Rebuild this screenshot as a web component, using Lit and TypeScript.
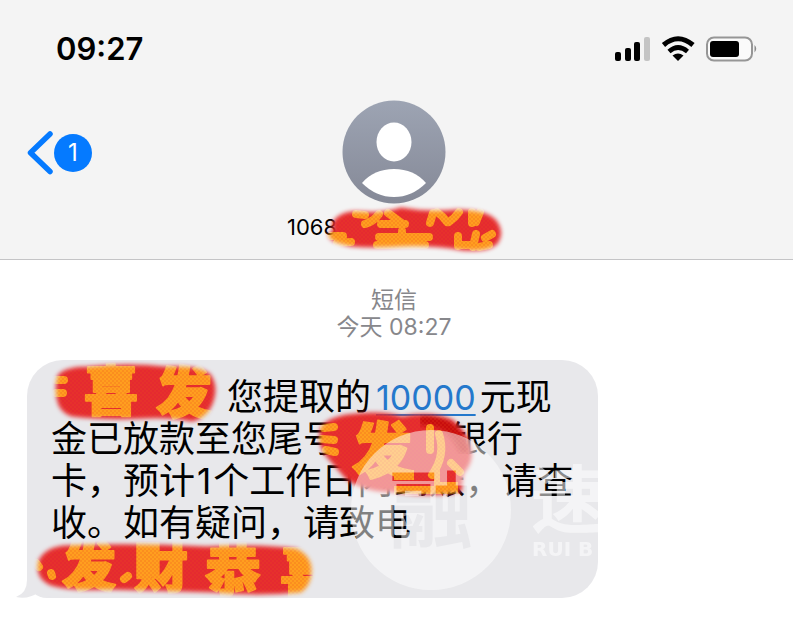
import { LitElement, html, css, svg } from "lit";
import { customElement } from "lit/decorators.js";

interface Glyph { t: string; x: number; y: number; s: number }
interface Stroke { name: string; box: number[]; shape: string; glyphs: Glyph[]; marks?: string; bars?: string; smear?: string }

const strokes: Record<string, Stroke> = {
  sender: {
    name: "sender",
    box: [320, 200, 190, 60],
    shape: "M334 224 Q342 211 362 213 Q384 215 402 209 Q430 214 458 211 Q486 211 496 221 Q504 232 498 242 Q490 251 464 249 Q436 244 404 245 Q372 247 352 245 Q330 241 331 234 Q338 232 334 224Z",
    glyphs: [],
    marks: "M357 214 L366 215 M380 214 Q374 222 366 224 M389 213 L404 224 M382 224 H406 M434 213 L431 223 M438 212 Q444 216 448 222 M460 212 Q456 218 450 222 M473 212 V223 M481 212 L477 222 M332 236 L344 236 M338 243 L352 242 M403 231 V245 M380 237 H430 M378 245 H426 M459 236 V246 M461 245 H474 M477 234 L474 247 M486 238 L493 234 M480 247 L490 245",
  },
  name: {
    name: "name",
    box: [50, 360, 175, 66],
    shape: "M59 376 Q66 368 88 368 Q130 364 165 368 Q198 366 209 375 Q217 386 212 401 Q207 416 192 420 Q170 416 146 417 Q104 419 72 415 Q60 411 58 398 Q56 386 59 376Z",
    glyphs: [
      { t: "喜", x: 84, y: 411, s: 54 },
      { t: "发", x: 156, y: 413, s: 56 },
    ],
    marks: "M56 380 L64 380 M56 393 L63 393",
  },
  account: {
    name: "account",
    box: [310, 405, 172, 96],
    shape: "M322 428 Q330 417 356 415 Q384 412 402 418 Q430 412 452 421 Q466 432 470 449 Q472 463 462 473 L460 491 Q432 496 398 491 Q364 491 347 478 Q334 463 326 454 Q318 441 322 428Z",
    glyphs: [{ t: "发", x: 352, y: 473, s: 60 }],
    marks: "M324 428 L334 427 M322 439 L334 440 M326 450 L335 452 M430 428 V450 M439 434 Q446 455 432 475 M451 463 L460 472",
    bars: "M394 470 h20 v10 h-20z M434 470 h6 v12 h18 v12 h-64 v-8 h40z",
    smear: "M424 420 Q452 420 464 448",
  },
  phone: {
    name: "phone",
    box: [30, 540, 292, 64],
    shape: "M40 561 Q46 549 64 547 Q132 544 206 548 Q260 545 296 550 Q309 556 310 569 Q310 585 300 591 Q260 595 214 591 Q150 589 106 588 Q72 590 51 584 Q36 577 40 561Z",
    glyphs: [
      { t: "发", x: 62, y: 587, s: 54 },
      { t: "财", x: 134, y: 588, s: 54 },
      { t: "恭", x: 205, y: 591, s: 56 },
      { t: "喜", x: 280, y: 593, s: 56 },
    ],
    marks: "M36 563 L39 567 M51 573 L52 576 M124 579 L128 576",
  },
};

const brush = (k: Stroke) => html`
  <svg class="brush ${k.name}" viewBox=${k.box.join(" ")} aria-hidden="true">
    <defs>
      <filter id="soft-${k.name}" x="-10%" y="-20%" width="120%" height="140%"><feGaussianBlur stdDeviation="2"></feGaussianBlur></filter>
      <pattern id="weave-${k.name}" width="4" height="4" patternUnits="userSpaceOnUse">
        <path d="M0 1h2M2 3h2" stroke="#e8481c" stroke-width="1" opacity=".4"></path>
      </pattern>
      <mask id="edge-${k.name}" maskUnits="userSpaceOnUse" x=${k.box[0]} y=${k.box[1]} width=${k.box[2]} height=${k.box[3]}>
        <path d=${k.shape} fill="#fff" stroke="#fff" stroke-width="3" filter="url(#soft-${k.name})"></path>
      </mask>
    </defs>
    <g mask="url(#edge-${k.name})">
      <rect x=${k.box[0]} y=${k.box[1]} width=${k.box[2]} height=${k.box[3]} fill="#e52a30"></rect>
      ${k.smear ? svg`<path d=${k.smear} fill="none" stroke="#c80c10" stroke-width="12" stroke-linecap="round" filter="url(#soft-${k.name})"></path>` : ""}
      ${k.glyphs.map((g) => svg`<text class="lucky" x=${g.x} y=${g.y} font-size=${g.s}>${g.t}</text>`)}
      ${k.marks ? svg`<path d=${k.marks} fill="none" stroke="#ff9f1f" stroke-width="8" stroke-linecap="round"></path>` : ""}
      ${k.bars ? svg`<path d=${k.bars} fill="#ff9f1f"></path>` : ""}
      <rect x=${k.box[0]} y=${k.box[1]} width=${k.box[2]} height=${k.box[3]} fill="url(#weave-${k.name})"></rect>
    </g>
  </svg>`;

@customElement("app-root")
export class AppRoot extends LitElement {
  static styles = css`
    :host { display: block; min-height: 100vh; background: #fff; color: #000; overflow: hidden;
      font-family: Inter, "Noto Sans CJK SC", sans-serif; }
    header { background: #f4f4f4; border-bottom: 1px solid #c4c4c6; height: 259px; }
    .status { display: flex; justify-content: space-between; align-items: center; padding: 30px 35px 0 56px; height: 38px; }
    .time { font-size: 31px; font-weight: 600; line-height: 38px; }
    .icons { width: 144px; height: 28px; }
    .nav { display: grid; grid-template-columns: 1fr auto 1fr; padding: 32px 32px 0 27px; }
    .back { display: flex; align-items: center; justify-self: start; align-self: start; height: 44px; margin-top: 31px; padding: 0; gap: 1px;
      border: 0; background: none; font-family: inherit; color: #fff; }
    .back svg { width: 26px; height: 44px; }
    .badge { width: 38px; height: 38px; border-radius: 50%; background: #057aff; font-size: 24px; line-height: 38px; text-align: center; }
    .contact { position: relative; display: flex; flex-direction: column; align-items: center; width: 214px; }
    .avatar { width: 104px; height: 104px; }
    .number { align-self: stretch; font-size: 22px; line-height: 28px; margin-top: 9px; }
    .stamp { text-align: center; color: #87878b; font-size: 23px; line-height: 27px; margin: 27px 0 19px; padding-right: 5px; }
    .bubble { position: relative; box-sizing: border-box; width: 72%; min-width: 571px; margin-left: 27px; padding: 16px 20px 54px 24px;
      background: #e8e8eb; border-radius: 36px 36px 36px 20px; }
    .bubble p { margin: 0; font-size: 36px; line-height: 42px; white-space: nowrap; }
    .bubble a { color: #2478cc; font-size: 34px; line-height: 1; text-decoration-thickness: 2px; text-underline-offset: 4px; margin: 0 4px 0 5px; }
    .one { font-size: 35px; line-height: 1; margin: 0 2px; }
    .gap { display: inline-block; }
    .gap.name-gap { width: 176px; }
    .gap.account-gap { width: 112px; }
    .tail { position: absolute; left: -11px; bottom: 0; width: 50px; height: 38px; }
    .brush { position: absolute; }
    .brush.sender { left: 32px; top: 100px; width: 190px; }
    .brush.name { left: 23px; top: 0; width: 175px; }
    .brush.account { left: 283px; top: 45px; width: 172px; }
    .brush.phone { left: 3px; top: 180px; width: 292px; }
    .lucky { font-family: "Noto Sans CJK SC", sans-serif; font-weight: 900; fill: #ff9f1f; stroke: #ff9f1f; stroke-width: 2; stroke-linejoin: round; }
    .mark { position: absolute; left: 323px; top: 68px; width: 248px; height: 164px; }
    .cut { font: 700 84px "Noto Sans CJK SC", sans-serif; }
    .word { font: 700 74px "Noto Sans CJK SC", sans-serif; fill: #fff; }
    .latin { font: 700 20px "DejaVu Sans", sans-serif; fill: #fff; }
  `;

  render() {
    return html`
      <header>
        <div class="status">
          <span class="time">09:27</span>
          <svg class="icons" viewBox="614 35 144 28" role="img" aria-label="信号、无线网络、电池">
            <rect x="615" y="52" width="6" height="9" rx="2"></rect>
            <rect x="625" y="48" width="6" height="13" rx="2"></rect>
            <rect x="634" y="42" width="6" height="19" rx="2"></rect>
            <rect x="644" y="37" width="6" height="24" rx="2" fill="#c4c4c4"></rect>
            <path d="M663.500 45 Q678 32.500 693 45" fill="none" stroke="#000" stroke-width="5"></path>
            <path d="M669 51.500 Q678 43.500 687.500 51.500" fill="none" stroke="#000" stroke-width="4.600"></path>
            <path d="M672.500 55.500 Q678 51.500 683.500 55.500 L678 61Z"></path>
            <rect x="707" y="37.500" width="45" height="23" rx="7" fill="#fafafa" stroke="#969696" stroke-width="2"></rect>
            <rect x="710" y="41" width="29" height="16" rx="3"></rect>
            <path d="M754.500 45 Q758 48.500 754.500 52.500Z" fill="#8a8a8a"></path>
          </svg>
        </div>
        <div class="nav">
          <button class="back" aria-label="返回，1 条未读">
            <svg viewBox="27 131 26 44" aria-hidden="true"><path d="M50 134 L30.500 152.800 L50 171.500" fill="none" stroke="#057aff" stroke-width="5.500" stroke-linecap="round" stroke-linejoin="round"></path></svg>
            <span class="badge">1</span>
          </button>
          <div class="contact">
            <svg class="avatar" viewBox="0 0 104 104" role="img" aria-label="联系人">
              <defs><linearGradient id="av" x2="0" y2="1"><stop stop-color="#9da4b3"></stop><stop offset="1" stop-color="#858997"></stop></linearGradient></defs>
              <circle cx="52" cy="52" r="51.500" fill="url(#av)"></circle>
              <ellipse cx="52" cy="42" rx="17.500" ry="19.500" fill="#fff"></ellipse>
              <path d="M20 83 Q32 69 52 69 Q72 69 84 83 Q70 97 52 97 Q34 97 20 83Z" fill="#fff"></path>
            </svg>
            <div class="number">1068</div>
            ${brush(strokes.sender)}
          </div>
        </div>
      </header>
      <main>
        <div class="stamp">短信<br>今天 08:27</div>
        <div class="bubble">
          <svg class="tail" viewBox="0 0 50 38" aria-hidden="true"><path d="M11 0 V20 Q11 33 0 37 Q12 40 23 32 Q32 38 50 38 V0Z" fill="#e8e8eb"></path></svg>
          <p><span class="gap name-gap"></span>您提取的<a href="#">10000</a>元现<br>金已放款至您尾号<span class="gap account-gap"></span>银行<br>卡，预计<span class="one">1</span>个工作日内到账，请查<br>收。如有疑问，请致电</p>
          ${brush(strokes.name)}
          ${brush(strokes.account)}
          ${brush(strokes.phone)}
          <svg class="mark" viewBox="350 428 248 164">
            <defs>
              <mask id="hole" maskUnits="userSpaceOnUse" x="350" y="428" width="248" height="164">
                <rect x="350" y="428" width="248" height="164" fill="#fff"></rect>
                <text class="cut" x="389" y="541">融</text>
              </mask>
            </defs>
            <circle cx="431" cy="510" r="80" fill="#fff" opacity=".5" mask="url(#hole)"></circle>
            <g opacity=".55">
              <text class="word" x="531" y="527">速</text>
              <text class="latin" x="532" y="556">RUI B</text>
            </g>
          </svg>
        </div>
      </main>`;
  }
}
